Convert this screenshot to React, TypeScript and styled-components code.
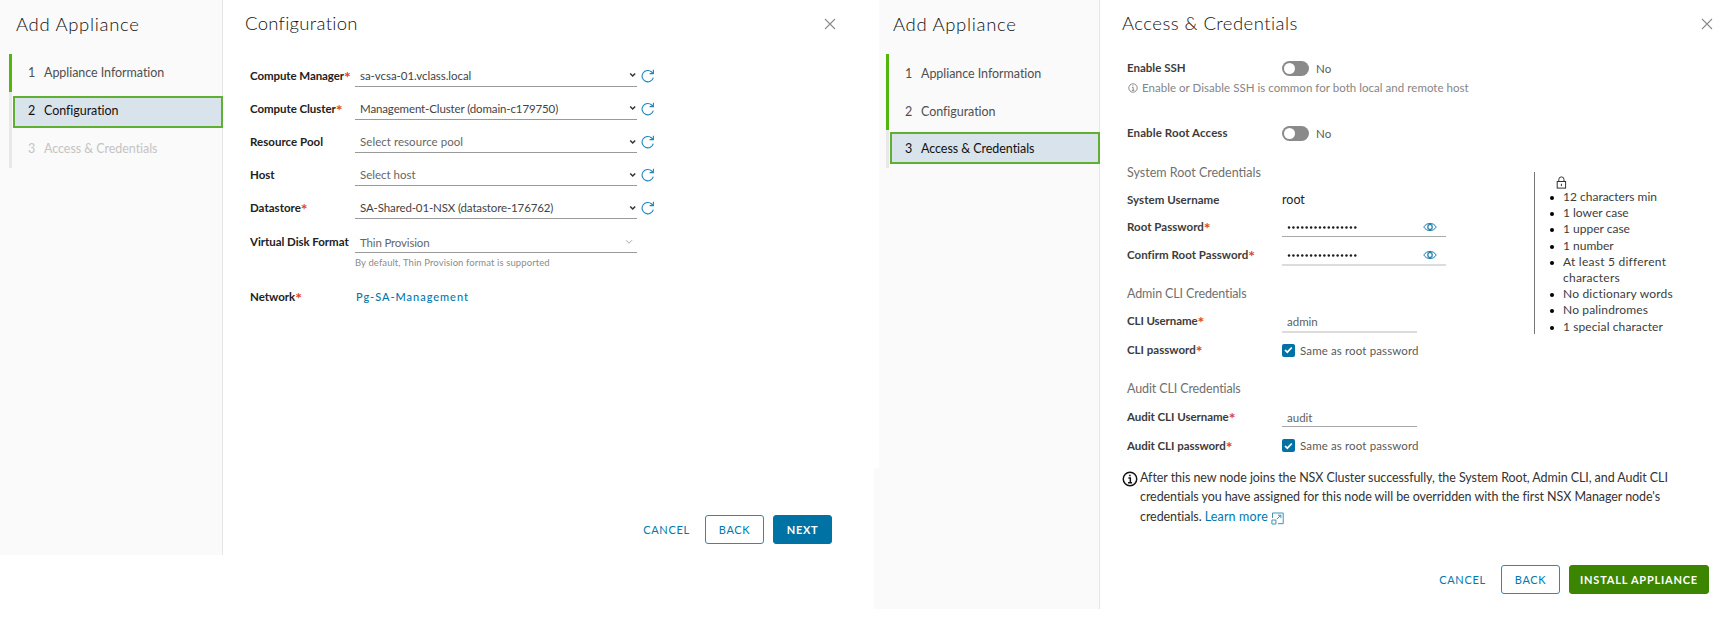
import React from "react";
import styled, { createGlobalStyle } from "styled-components";

const GlobalStyle = createGlobalStyle`
  * { box-sizing: border-box; }
  body { margin: 0; background: #fff; font-family: Lato, "Open Sans", sans-serif; color: #454545; }
  h1, h2, h3, ul, p { margin: 0; padding: 0; font-weight: inherit; font-size: inherit; }
  button { font-family: inherit; }
`;

const Page = styled.div`
  display: flex;
  align-items: flex-start;
  width: 1728px;
  height: 622px;
  overflow: hidden;
`;

const Dialog = styled.section<{ $width: number; $height: number }>`
  display: flex;
  flex: none;
  width: ${p => p.$width}px;
  height: ${p => p.$height}px;
`;

const Sidebar = styled.aside<{ $pad: number; $width: number; $top: number }>`
  position: relative;
  flex: none;
  width: ${p => p.$width}px;
  padding: ${p => p.$top}px 0 0 ${p => p.$pad}px;
  background: #fafafa;
  border-right: 1px solid #e6e6e6;
`;

/* The lower part of the second sidebar is slightly wider than the upper part. */
const SidebarFoot = styled.div`
  position: absolute;
  left: -5px;
  top: 468px;
  bottom: 0;
  width: 5px;
  background: #fafafa;
`;

const SideTitle = styled.h1`
  height: 28px;
  padding-left: 7px;
  font-size: 18.5px;
  font-weight: 300;
  line-height: 28px;
  letter-spacing: 0.68px;
  color: #111;
`;

const Steps = styled.div`
  display: grid;
  grid-template-columns: 4px 1fr;
  margin-top: 16px;
`;

const Track = styled.div<{ $done: number }>`
  width: 3px;
  background: linear-gradient(#53b60c 0 ${p => p.$done}px, #e8e8e8 ${p => p.$done}px);
`;

const StepList = styled.div`
  display: flex;
  flex-direction: column;
`;

const Step = styled.div<{ $state: "done" | "active" | "todo"; $offset: number }>`
  display: flex;
  align-items: center;
  height: ${p => (p.$state === "active" ? 32 : 38)}px;
  margin: ${p => (p.$state === "active" ? `${3 + p.$offset}px -1px ${3 - p.$offset}px 0` : "0")};
  padding-left: ${p => (p.$state === "active" ? 13 : 15)}px;
  padding-bottom: ${p => (p.$state === "active" && p.$offset > 0 ? 2 : 0)}px;
  border: ${p => (p.$state === "active" ? "2px solid #5fb032" : "0")};
  background: ${p => (p.$state === "active" ? "#d9e3eb" : "transparent")};
  color: ${p => (p.$state === "active" ? "#111" : p.$state === "done" ? "#505050" : "#c4c4c4")};
  font-size: 12.5px;
  font-weight: 400;
  letter-spacing: -0.05px;
  white-space: nowrap;
`;

const StepNumber = styled.span`
  width: 16px;
`;

const Main = styled.main`
  display: flex;
  flex: 1;
  flex-direction: column;
  min-width: 0;
`;

const Header = styled.header<{ $right: number; $track: number; $left: number }>`
  display: flex;
  align-items: center;
  justify-content: space-between;
  height: 48px;
  padding: 0 ${p => p.$right}px 0 ${p => p.$left}px;
  font-size: 18.5px;
  font-weight: 300;
  letter-spacing: ${p => p.$track}px;
  color: #111;

  h2 { padding-bottom: 2px; }
`;

const Form = styled.div<{ $left: number; $top: number }>`
  padding: ${p => p.$top}px 0 0 ${p => p.$left}px;
`;

const Row = styled.div<{ $h: number; $cols: number; $dark?: boolean }>`
  display: grid;
  grid-template-columns: ${p => p.$cols}px auto;
  justify-content: start;
  align-items: center;
  height: ${p => p.$h}px;
  color: ${p => (p.$dark ? "#222" : "#3c3c3c")};
`;

const Label = styled.label<{ $track?: number }>`
  display: flex;
  font-size: 11.5px;
  font-weight: 700;
  line-height: 16px;
  letter-spacing: ${p => p.$track ?? 0}px;
  white-space: nowrap;
`;

const Required = styled.span`
  color: #e0452c;
  font-size: 16px;
  line-height: 18px;
  font-weight: 700;
  letter-spacing: 0;
  height: 16px;
`;

const SelectWrap = styled.div`
  display: flex;
  align-items: center;
  gap: 4px;
`;

const SelectBox = styled.div<{ $muted?: boolean; $track: number; $disabled?: boolean }>`
  display: flex;
  align-items: center;
  justify-content: space-between;
  width: 282px;
  height: 20px;
  margin-top: ${p => (p.$disabled ? 1 : 2)}px;
  padding: 0 ${p => (p.$disabled ? 4 : 0)}px ${p => (p.$disabled ? 0 : 2)}px 5px;
  border-bottom: 1px solid #9a9a9a;
  color: ${p => (p.$muted ? "#666" : "#444")};
  font-size: 11.5px;
  letter-spacing: ${p => p.$track}px;
  white-space: nowrap;
`;

const Helper = styled.p`
  height: 16px;
  margin: -5px 0 0 105px;
  color: #8c8c8c;
  font-size: 9.5px;
  line-height: 16px;
  letter-spacing: 0.1px;
`;

const NetworkLink = styled.a`
  padding-left: 1px;
  color: #0079ad;
  font-size: 11px;
  font-weight: 500;
  letter-spacing: 0.97px;
`;

const Footer = styled.footer<{ $right: number; $bottom: number }>`
  display: flex;
  justify-content: flex-end;
  margin-top: auto;
  padding: 0 ${p => p.$right}px ${p => p.$bottom}px 0;
`;

const Button = styled.button<{ $kind: "link" | "outline" | "primary" | "success"; $w: number }>`
  width: ${p => p.$w}px;
  height: 29px;
  margin-left: ${p => (p.$kind === "primary" || p.$kind === "success" ? 9 : 0)}px;
  padding: 0;
  border: 1px solid
    ${p => ({ link: "transparent", outline: "#2a8bb8", primary: "#0072a3", success: "#3b8500" })[p.$kind]};
  border-radius: 3px;
  background: ${p => ({ link: "transparent", outline: "#fff", primary: "#0072a3", success: "#3b8500" })[p.$kind]};
  color: ${p => (p.$kind === "primary" || p.$kind === "success" ? "#fff" : "#0079ad")};
  font-size: 11px;
  font-weight: ${p => (p.$kind === "primary" || p.$kind === "success" ? 700 : 400)};
  letter-spacing: ${p => (p.$kind === "success" ? 0.78 : 0.65)}px;
  white-space: nowrap;
`;

const Body = styled.div`
  display: flex;
  align-items: flex-start;
`;

const AccessForm = styled(Form)`
  width: 434px;
  flex: none;
`;

const Switch = styled.span`
  display: flex;
  align-items: center;
  width: 27px;
  height: 15px;
  padding: 0 2px;
  border-radius: 8px;
  background: #8a8a8a;

  &::before {
    content: "";
    width: 11px;
    height: 11px;
    border-radius: 50%;
    background: #fff;
  }
`;

const Inline = styled.div<{ $gap: number }>`
  display: flex;
  align-items: center;
  gap: ${p => p.$gap}px;
  color: #5a5a5a;
  font-size: 11.5px;
  letter-spacing: 0.13px;
  white-space: nowrap;
`;

const Hint = styled.div`
  display: flex;
  align-items: center;
  gap: 4px;
  height: 17px;
  margin-top: -1px;
  padding-left: 1px;
  color: #858585;
  font-size: 11.5px;
  letter-spacing: 0.04px;
  white-space: nowrap;

  svg { margin-top: 1px; }
`;

const Heading = styled.h3<{ $top: number; $track: number }>`
  height: 27px;
  margin-top: ${p => p.$top}px;
  color: #707070;
  font-size: 12.5px;
  line-height: 27px;
  letter-spacing: ${p => p.$track}px;
`;

const Plain = styled.span`
  color: #222;
  font-size: 12.5px;
`;

const Field = styled.div<{ $w: number; $soft?: boolean }>`
  display: flex;
  align-items: center;
  justify-content: space-between;
  align-self: end;
  width: ${p => p.$w}px;
  height: 20px;
  margin-bottom: ${p => (p.$soft ? 3 : 4)}px;
  padding: ${p => (p.$soft ? 0 : 1)}px 9px 0 5px;
  border-bottom: ${p => (p.$soft ? "2px solid #dcdcdc" : "1px solid #a8a8a8")};
  color: #606060;
  font-size: 11.5px;
`;

const Dots = styled.svg`
  display: block;
  width: 72px;
  height: 4px;
`;

const CheckMark = styled.span`
  display: flex;
  align-items: center;
  justify-content: center;
  width: 13px;
  height: 13px;
  border-radius: 2px;
  background: #0072a3;
`;

const Rules = styled.div`
  height: 162px;
  width: 170px;
  margin-top: 124px;
  border-left: 1px solid #777;
  color: #3c3c3c;

  > svg { display: block; margin: 4px 0 0 21px; }
`;

const RuleList = styled.ul`
  list-style: none;
  font-size: 12px;
  line-height: 16.2px;
`;

const Rule = styled.li<{ $track: number }>`
  display: flex;
  gap: 9px;
  padding-left: 15px;
  letter-spacing: ${p => p.$track}px;

  &::before {
    content: "";
    flex: none;
    width: 4px;
    height: 4px;
    margin-top: 7px;
    border-radius: 50%;
    background: #000;
  }
`;

const RuleText = styled.span`
  max-width: 120px;
`;

const Note = styled.div`
  display: flex;
  gap: 2px;
  padding: 7px 0 0 22px;
  color: #333;
  font-size: 12.5px;
  line-height: 19.5px;
  letter-spacing: -0.07px;
  white-space: nowrap;

  > svg { flex: none; margin-top: 3px; }
`;

const LearnMore = styled.a`
  color: #0079ad;
  letter-spacing: 0.15px;

  svg { margin-left: 0; vertical-align: -4px; }
`;

const Close = () => (
  <svg width="12" height="12" viewBox="0 0 12 12" stroke="#8a8a8a" strokeWidth="1.1">
    <path d="M1 1l10 10M11 1L1 11" />
  </svg>
);

const Chevron = ({ light }: { light?: boolean }) =>
  light ? (
    <svg width="8" height="6" viewBox="0 0 8 6" fill="none" stroke="#aaa" strokeWidth="1">
      <path d="M1 1.2l3 3 3-3" />
    </svg>
  ) : (
    <svg width="8" height="6" viewBox="0 0 8 6" fill="none" stroke="#333" strokeWidth="1.5">
      <path d="M1.2 1.5l2.5 2.5 2.5-2.5" />
    </svg>
  );

const Refresh = () => (
  <svg width="14" height="14" viewBox="0 0 14 14" fill="none" stroke="#1c86bd" strokeWidth="1.1">
    <path d="M12.3 8.6A5.7 5.7 0 1 1 10.7 3L12 4.3M12.4.8v3.8H8.6" />
  </svg>
);

const Eye = () => (
  <svg width="14" height="10" viewBox="0 0 14 10" fill="none" stroke="#1b7cab" strokeWidth="1">
    <path d="M.8 5C3.6.2 10.4.2 13.2 5 10.4 9.8 3.6 9.8.8 5z" />
    <rect x="4.9" y="2.6" width="4.2" height="4.8" rx="1.6" strokeWidth="1.3" />
  </svg>
);

const Info = ({ size, color, stroke }: { size: number; color: string; stroke: number }) => (
  <svg width={size} height={size} viewBox="0 0 14 14" fill="none" stroke={color} strokeWidth={stroke}>
    <circle cx="7" cy="7" r="5.9" />
    <path d="M5.6 6.2h1.7v4M5.3 10.3h3.5M6.2 3.9h1.4" />
  </svg>
);

const Lock = () => (
  <svg width="11" height="13" viewBox="0 0 11 13" fill="none" stroke="#333" strokeWidth="1">
    <rect x="1.2" y="5.5" width="8.4" height="6.6" />
    <path d="M2.8 5.4V3.6a2.6 2.7 0 0 1 5.2 0v1.8M5.4 7.8v2.3" />
  </svg>
);

const External = () => (
  <svg width="13" height="13" viewBox="0 0 13 13" fill="none" stroke="#3a94be" strokeWidth="1">
    <path d="M1.5 6V1h10.7v10.7H7M.9 8h4v4h-4zM5.8 7.2l4-4M7 3.2h2.9v2.9" />
  </svg>
);

const Tick = () => (
  <svg width="9" height="8" viewBox="0 0 9 8" fill="none" stroke="#fff" strokeWidth="1.7">
    <path d="M1 4l2.3 2.2L7.8 1.5" />
  </svg>
);

const steps = ["Appliance Information", "Configuration", "Access & Credentials"];

const Wizard = ({ active, offset }: { active: number; offset: number }) => (
  <Steps>
    <Track $done={38 * active} />
    <StepList>
      {steps.map((name, i) => (
        <Step key={name} $offset={offset} $state={i < active ? "done" : i === active ? "active" : "todo"}>
          <StepNumber>{i + 1}</StepNumber>
          {name}
        </Step>
      ))}
    </StepList>
  </Steps>
);

const selects = [
  { label: "Compute Manager", value: "sa-vcsa-01.vclass.local", required: true, track: -0.05, trackLabel: -0.08 },
  { label: "Compute Cluster", value: "Management-Cluster (domain-c179750)", required: true, track: -0.12, trackLabel: -0.05 },
  { label: "Resource Pool", value: "Select resource pool", muted: true, track: 0.05, trackLabel: 0.03 },
  { label: "Host", value: "Select host", muted: true, track: 0, trackLabel: 0 },
  { label: "Datastore", value: "SA-Shared-01-NSX (datastore-176762)", required: true, track: -0.13, trackLabel: 0.02 },
];

const rules: [string, number][] = [
  ["12 characters min", 0],
  ["1 lower case", 0],
  ["1 upper case", 0],
  ["1 number", 0],
  ["At least 5 different characters", 0.24],
  ["No dictionary words", 0.2],
  ["No palindromes", 0.15],
  ["1 special character", 0.1],
];

const Star = () => <Required>*</Required>;

const Toggle = () => (
  <Inline $gap={7}>
    <Switch />
    No
  </Inline>
);

const Password = ({ soft }: { soft?: boolean }) => (
  <Field $w={164} $soft={soft}>
    <Dots viewBox="0 0 72 4" fill="#1c1c1c">
      {Array.from({ length: 16 }, (_, i) => <circle key={i} cx={2 + i * 4.42} cy={2.4} r={1.25} />)}
    </Dots>
    <Eye />
  </Field>
);

const SameAsRoot = () => (
  <Inline $gap={5}>
    <CheckMark><Tick /></CheckMark>
    Same as root password
  </Inline>
);

const ConfigurationDialog = () => (
  <Dialog $width={879} $height={555}>
    <Sidebar $pad={9} $width={223} $top={9.6}>
      <SideTitle>Add Appliance</SideTitle>
      <Wizard active={1} offset={1} />
    </Sidebar>
    <Main>
      <Header $left={22} $right={43} $track={0.3}>
        <h2>Configuration</h2>
        <Close />
      </Header>
      <Form $left={27} $top={11.3}>
        {selects.map(s => (
          <Row key={s.label} $h={33.1} $cols={105} $dark>
            <Label $track={s.trackLabel}>{s.label}{s.required && <Star />}</Label>
            <SelectWrap>
              <SelectBox $muted={s.muted} $track={s.track}>{s.value}<Chevron /></SelectBox>
              <Refresh />
            </SelectWrap>
          </Row>
        ))}
        <Row $h={35} $cols={105} $dark>
          <Label $track={-0.05}>Virtual Disk Format</Label>
          <SelectBox $muted $disabled $track={-0.16}>Thin Provision<Chevron light /></SelectBox>
        </Row>
        <Helper>By default, Thin Provision format is supported</Helper>
        <Row $h={52} $cols={105} $dark>
          <Label>Network<Star /></Label>
          <NetworkLink>Pg-SA-Management</NetworkLink>
        </Row>
      </Form>
      <Footer $right={47} $bottom={11}>
        <Button $kind="link" $w={77}>CANCEL</Button>
        <Button $kind="outline" $w={59}>BACK</Button>
        <Button $kind="primary" $w={59}>NEXT</Button>
      </Footer>
    </Main>
  </Dialog>
);

const AccessDialog = () => (
  <Dialog $width={849} $height={609}>
    <Sidebar $pad={7} $width={221} $top={10}>
      <SidebarFoot />
      <SideTitle>Add Appliance</SideTitle>
      <Wizard active={2} offset={-1} />
    </Sidebar>
    <Main>
      <Header $left={22} $right={15} $track={0.46}>
        <h2>Access &amp; Credentials</h2>
        <Close />
      </Header>
      <Body>
        <AccessForm $left={27} $top={8}>
          <Row $h={24} $cols={155}><Label>Enable SSH</Label><Toggle /></Row>
          <Hint>
            <Info size={10} color="#777" stroke={1.2} />
            Enable or Disable SSH is common for both local and remote host
          </Hint>
          <Row $h={74} $cols={155}><Label $track={0.1}>Enable Root Access</Label><Toggle /></Row>
          <Heading $top={-11} $track={0}>System Root Credentials</Heading>
          <Row $h={27.5} $cols={155}><Label $track={0.05}>System Username</Label><Plain>root</Plain></Row>
          <Row $h={27.5} $cols={155}><Label $track={0.03}>Root Password<Star /></Label><Password /></Row>
          <Row $h={27.5} $cols={155}><Label $track={0.03}>Confirm Root Password<Star /></Label><Password soft /></Row>
          <Heading $top={11.5} $track={-0.12}>Admin CLI Credentials</Heading>
          <Row $h={28.5} $cols={155}><Label $track={-0.1}>CLI Username<Star /></Label><Field $w={135} $soft>admin</Field></Row>
          <Row $h={29.5} $cols={155}><Label>CLI password<Star /></Label><SameAsRoot /></Row>
          <Heading $top={10} $track={-0.12}>Audit CLI Credentials</Heading>
          <Row $h={29} $cols={155}><Label $track={-0.05}>Audit CLI Username<Star /></Label><Field $w={135}>audit</Field></Row>
          <Row $h={29.5} $cols={155}><Label $track={-0.05}>Audit CLI password<Star /></Label><SameAsRoot /></Row>
        </AccessForm>
        <Rules>
          <Lock />
          <RuleList>
            {rules.map(([text, track]) => <Rule key={text} $track={track}><RuleText>{text}</RuleText></Rule>)}
          </RuleList>
        </Rules>
      </Body>
      <Note>
        <Info size={16} color="#111" stroke={1.3} />
        <p>
          After this new node joins the NSX Cluster successfully, the System Root, Admin CLI, and Audit CLI<br />
          credentials you have assigned for this node will be overridden with the first NSX Manager node's<br />
          credentials. <LearnMore>Learn more <External /></LearnMore>
        </p>
      </Note>
      <Footer $right={19} $bottom={15.5}>
        <Button $kind="link" $w={77}>CANCEL</Button>
        <Button $kind="outline" $w={59}>BACK</Button>
        <Button $kind="success" $w={140}>INSTALL APPLIANCE</Button>
      </Footer>
    </Main>
  </Dialog>
);

export default function App() {
  return (
    <Page>
      <GlobalStyle />
      <ConfigurationDialog />
      <AccessDialog />
    </Page>
  );
}
